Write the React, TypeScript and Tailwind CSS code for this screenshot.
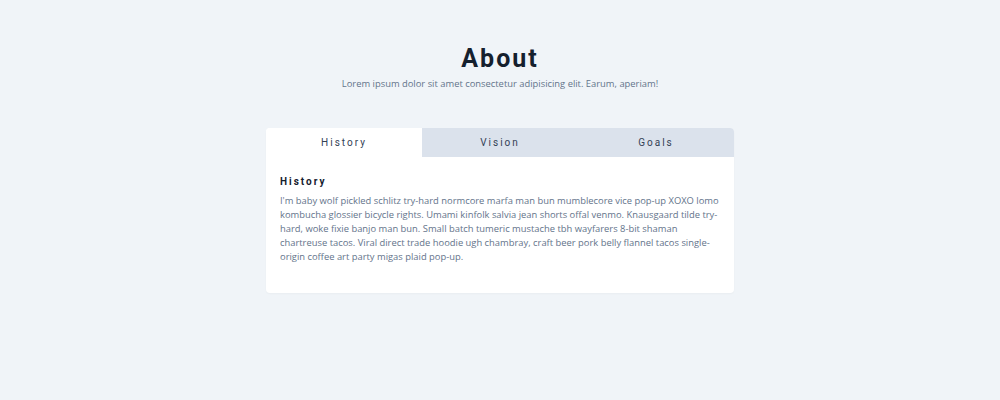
import { useState } from "react";

const tabs = [
  {
    title: "History",
    body: "I'm baby wolf pickled schlitz try-hard normcore marfa man bun mumblecore vice pop-up XOXO lomo kombucha glossier bicycle rights. Umami kinfolk salvia jean shorts offal venmo. Knausgaard tilde try-hard, woke fixie banjo man bun. Small batch tumeric mustache tbh wayfarers 8-bit shaman chartreuse tacos. Viral direct trade hoodie ugh chambray, craft beer pork belly flannel tacos single-origin coffee art party migas plaid pop-up.",
  },
  {
    title: "Vision",
    body: "Man bun PBR&B keytar copper mug prism, hell of helvetica. Synth crucifix offal deep v hella biodiesel. Church-key listicle polaroid put a bird on it chillwave palo santo enamel pin, tattooed meggings franzen la croix cray.",
  },
  {
    title: "Goals",
    body: "Chambray authentic truffaut, kickstarter brunch taxidermy vape heirloom four dollar toast raclette shoreditch church-key. Poutine etsy tote bag, cred fingerstache leggings cornhole everyday carry blog gastropub.",
  },
];

export default function App() {
  const [active, setActive] = useState(0);
  const tab = tabs[active];

  return (
    <div className="min-h-[400px] bg-[#f0f4f8] pt-[43px] font-['Open_Sans',sans-serif]">
      <div className="text-center">
        <h2 className="font-['Roboto',sans-serif] text-[25px] leading-8 font-bold tracking-[2px] text-[#15202e]">About</h2>
        <p className="mt-[1px] text-[9.4px] leading-4 text-[#64748b]">
          Lorem ipsum dolor sit amet consectetur adipisicing elit. Earum, aperiam!
        </p>
      </div>

      <div className="mx-auto mt-[36px] w-[468px] rounded bg-white shadow-[0_1px_2px_rgba(0,0,0,0.03)]">
        <div className="grid grid-cols-3">
          {tabs.map((t, i) => (
            <button
              key={t.title}
              onClick={() => setActive(i)}
              className={
                "h-[29px] font-['Roboto',sans-serif] text-[10px] tracking-[2px] text-[#334155] " +
                (i === active ? "bg-white" : "bg-[#dbe2ec]") +
                (i === 2 ? " rounded-tr" : "") +
                (i === 0 ? " rounded-tl" : "")
              }
            >
              {t.title}
            </button>
          ))}
        </div>
        <div className="px-[14px] pt-[17px] pb-[29px]">
          <h4 className="font-['Roboto',sans-serif] text-[10px] leading-4 font-bold tracking-[2px] text-[#15202e]">
            {tab.title}
          </h4>
          <p className="mt-[4px] text-[9.4px] leading-[14px] text-[#64748b]">{tab.body}</p>
        </div>
      </div>
    </div>
  );
}
